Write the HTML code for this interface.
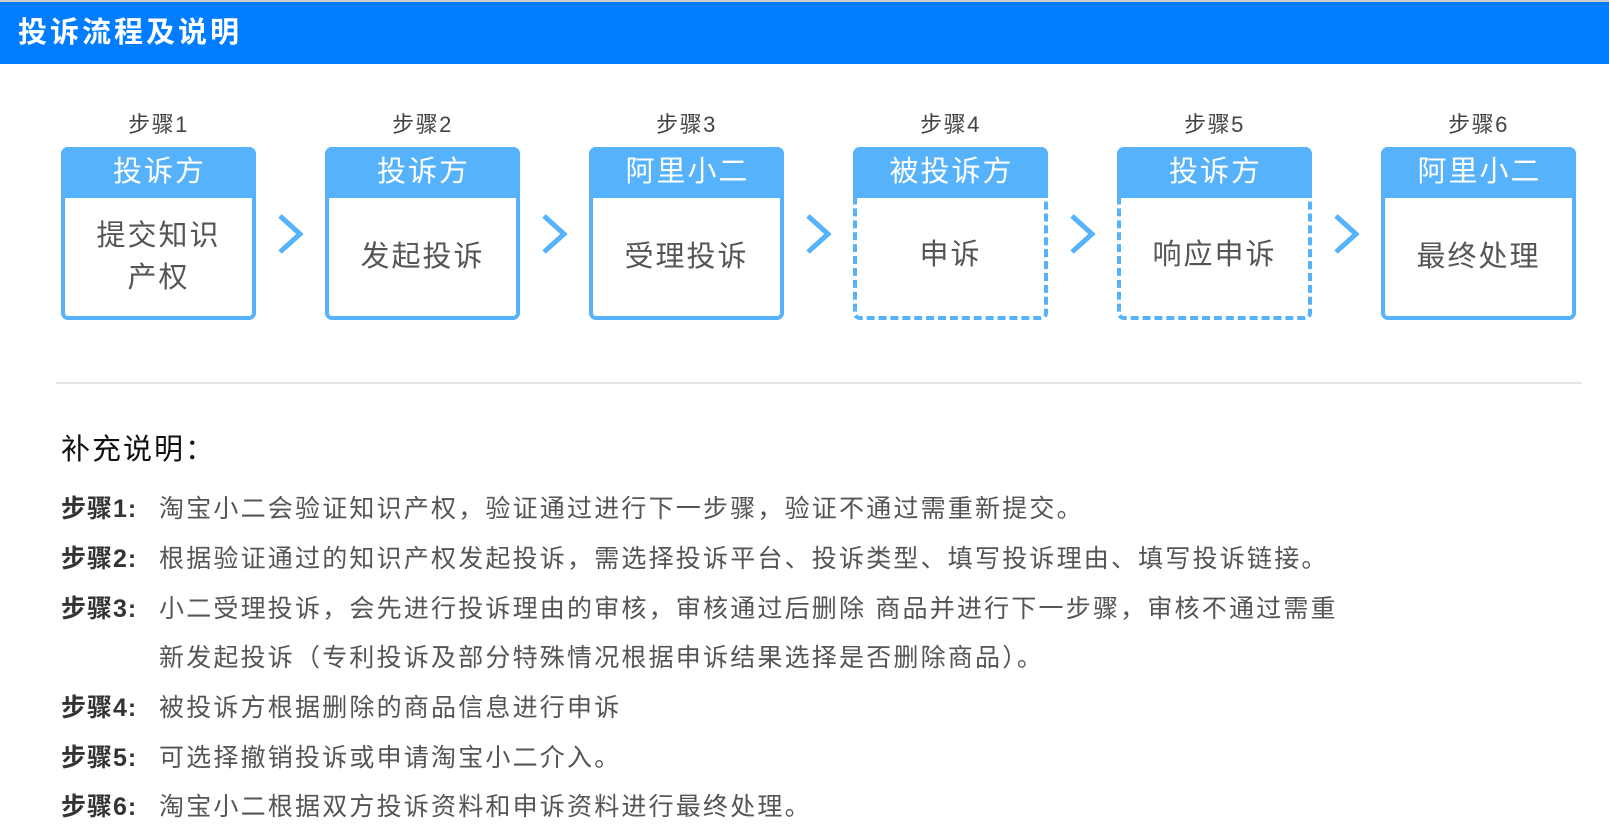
<!DOCTYPE html>
<html><head><meta charset="utf-8"><style>
*{margin:0;padding:0;box-sizing:border-box}
body{width:1609px;height:834px;background:#fff;font-family:"Liberation Sans","Noto Sans CJK SC",sans-serif;position:relative;overflow:hidden}
.top{position:absolute;left:0;top:0;width:1609px;height:2px;background:#ccc}
.hd{position:absolute;left:0;top:2px;width:1609px;height:62px;background:#007dfe;color:#fff;font-size:29px;font-weight:bold;line-height:62px;padding-left:18px;letter-spacing:3px}
.lbl{position:absolute;top:107px;width:195px;text-align:center;font-size:22px;color:#444;letter-spacing:1.5px}
.box{position:absolute;top:147px;width:195px;height:173px;border:4px solid #56b3fb;border-radius:7px;background:#fff}
.box.d{border-style:dashed;border-top:none}
.bh{position:absolute;left:-4px;top:-4px;right:-4px;height:51px;background:#56b3fb;color:#fff;font-size:29px;text-align:center;line-height:51px;border-radius:7px 7px 0 0;letter-spacing:2px;text-indent:2px}
.box.d .bh{top:0}
.bb{position:absolute;left:0;right:0;top:47px;bottom:0;display:flex;align-items:center;justify-content:center;text-align:center;font-size:29px;color:#555;line-height:42px;padding:0 12px;letter-spacing:2px}
.arr{position:absolute;top:213px}
.hr{position:absolute;left:56px;top:382px;width:1526px;height:2px;background:#e5e5e5}
.t2{position:absolute;left:61px;top:426px;font-size:29px;color:#111;letter-spacing:2px}
.ln{position:absolute;font-size:25px;color:#555;white-space:nowrap;letter-spacing:2.2px}
.ln b{position:absolute;left:0;color:#333;font-weight:bold;letter-spacing:1px}
</style></head><body>
<div class="top"></div>
<div class="hd">投诉流程及说明</div>

<div class="lbl" style="left:61px">步骤1</div>
<div class="lbl" style="left:325px">步骤2</div>
<div class="lbl" style="left:589px">步骤3</div>
<div class="lbl" style="left:853px">步骤4</div>
<div class="lbl" style="left:1117px">步骤5</div>
<div class="lbl" style="left:1381px">步骤6</div>

<div class="box" style="left:61px"><div class="bh">投诉方</div><div class="bb">提交知识<br>产权</div></div>
<div class="box" style="left:325px"><div class="bh">投诉方</div><div class="bb">发起投诉</div></div>
<div class="box" style="left:589px"><div class="bh">阿里小二</div><div class="bb">受理投诉</div></div>
<div class="box d" style="left:853px"><div class="bh">被投诉方</div><div class="bb">申诉</div></div>
<div class="box d" style="left:1117px"><div class="bh">投诉方</div><div class="bb">响应申诉</div></div>
<div class="box" style="left:1381px"><div class="bh">阿里小二</div><div class="bb">最终处理</div></div>

<svg class="arr" style="left:276px" width="30" height="42"><path d="M4 3 L24 21 L4 39" fill="none" stroke="#56b3fb" stroke-width="5"/></svg>
<svg class="arr" style="left:540px" width="30" height="42"><path d="M4 3 L24 21 L4 39" fill="none" stroke="#56b3fb" stroke-width="5"/></svg>
<svg class="arr" style="left:804px" width="30" height="42"><path d="M4 3 L24 21 L4 39" fill="none" stroke="#56b3fb" stroke-width="5"/></svg>
<svg class="arr" style="left:1068px" width="30" height="42"><path d="M4 3 L24 21 L4 39" fill="none" stroke="#56b3fb" stroke-width="5"/></svg>
<svg class="arr" style="left:1332px" width="30" height="42"><path d="M4 3 L24 21 L4 39" fill="none" stroke="#56b3fb" stroke-width="5"/></svg>

<div class="hr"></div>
<div class="t2">补充说明：</div>

<div class="ln" style="left:61px;top:489px"><b>步骤1:</b><span style="margin-left:98px">淘宝小二会验证知识产权，验证通过进行下一步骤，验证不通过需重新提交。</span></div>
<div class="ln" style="left:61px;top:539px"><b>步骤2:</b><span style="margin-left:98px">根据验证通过的知识产权发起投诉，需选择投诉平台、投诉类型、填写投诉理由、填写投诉链接。</span></div>
<div class="ln" style="left:61px;top:589px"><b>步骤3:</b><span style="margin-left:98px">小二受理投诉，会先进行投诉理由的审核，审核通过后删除 商品并进行下一步骤，审核不通过需重</span></div>
<div class="ln" style="left:61px;top:638px"><span style="margin-left:98px">新发起投诉（专利投诉及部分特殊情况根据申诉结果选择是否删除商品）。</span></div>
<div class="ln" style="left:61px;top:688px"><b>步骤4:</b><span style="margin-left:98px">被投诉方根据删除的商品信息进行申诉</span></div>
<div class="ln" style="left:61px;top:738px"><b>步骤5:</b><span style="margin-left:98px">可选择撤销投诉或申请淘宝小二介入。</span></div>
<div class="ln" style="left:61px;top:787px"><b>步骤6:</b><span style="margin-left:98px">淘宝小二根据双方投诉资料和申诉资料进行最终处理。</span></div>
</body></html>
